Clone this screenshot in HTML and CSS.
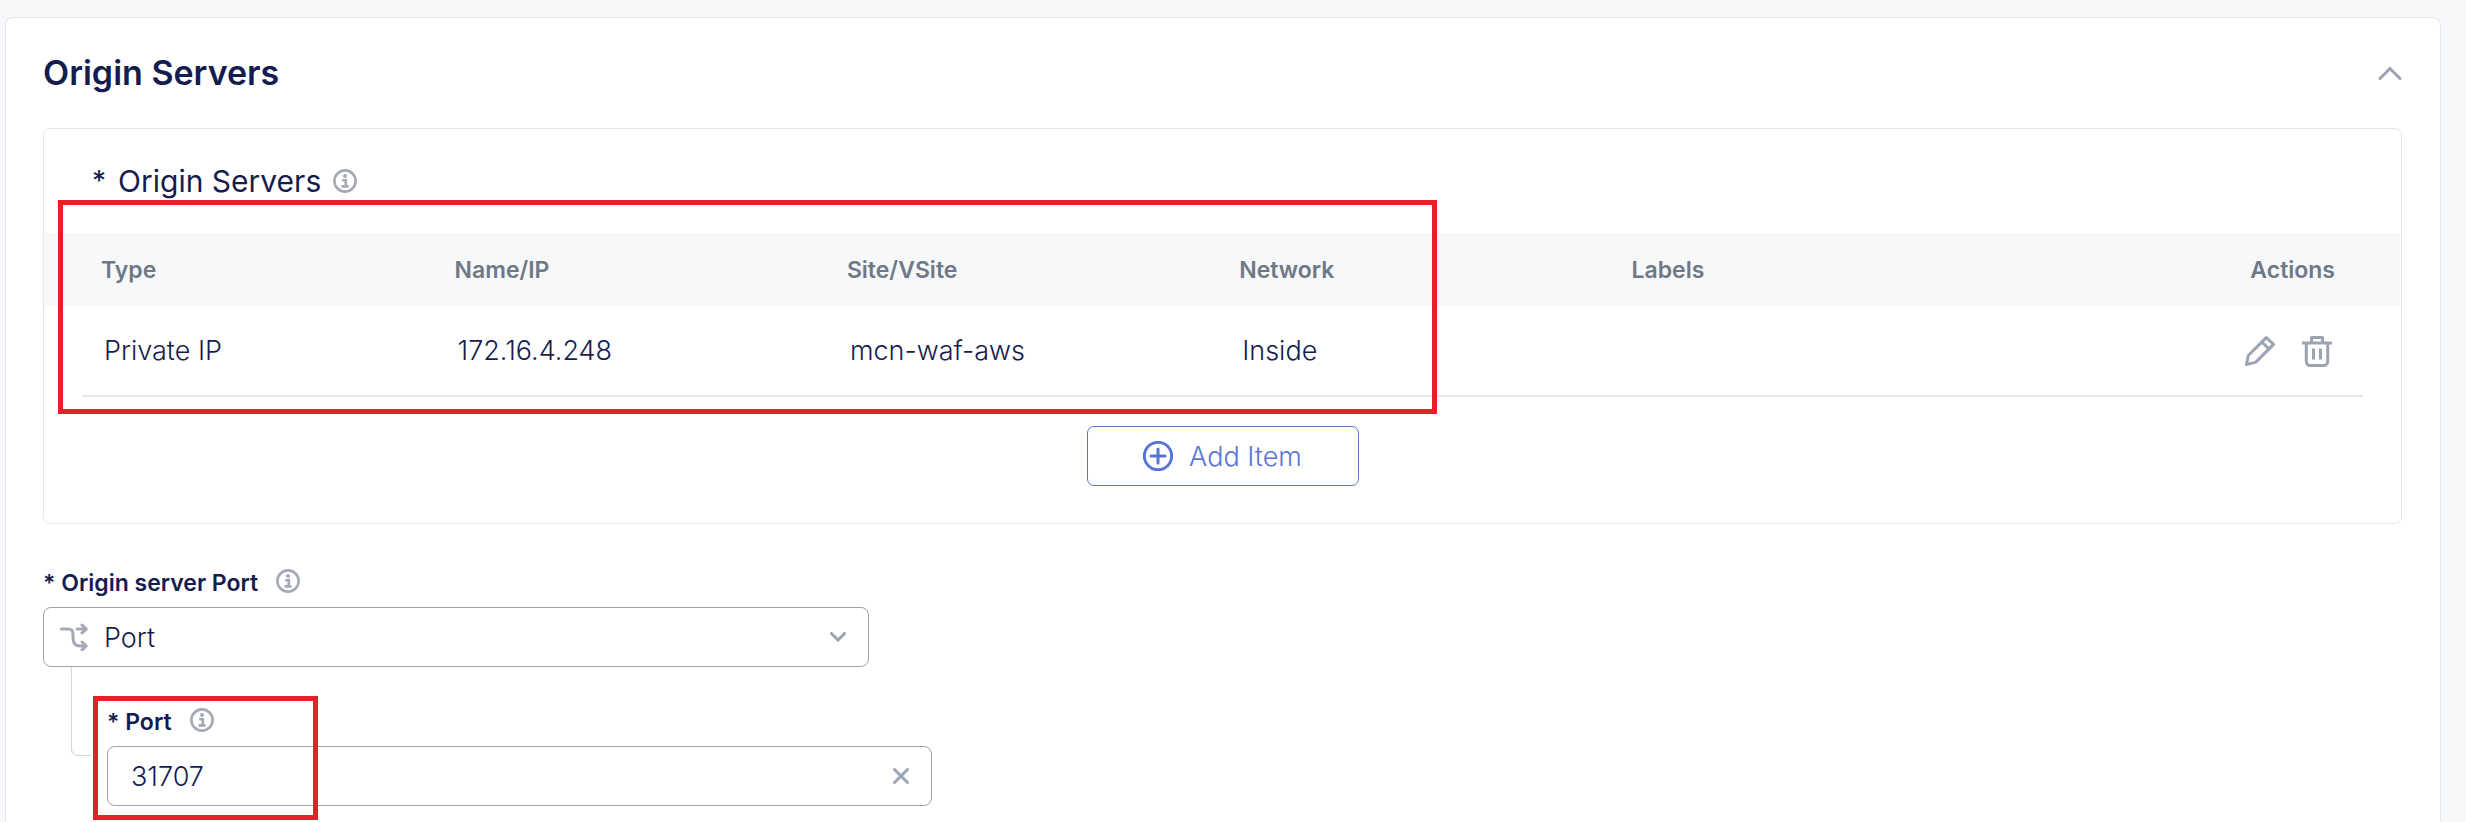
FILE: index.html
```html
<!DOCTYPE html>
<html lang="en">
<head>
<meta charset="utf-8">
<title>Origin Servers</title>
<link rel="stylesheet" href="styles.css">
</head>
<body>
<svg class="defs" aria-hidden="true">
  <symbol id="icon-info" viewBox="0 0 24 24">
    <circle cx="12" cy="12" r="10.6" fill="none" stroke="currentColor" stroke-width="2.6"/>
    <circle cx="12" cy="7" r="2" fill="currentColor"/>
    <path d="M9.2 11.2h3.6v6M8.6 17.4h7" fill="none" stroke="currentColor" stroke-width="2.6"/>
  </symbol>
</svg>
<main class="page">
  <section class="card">
    <header class="card-header">
      <h1 class="card-title">Origin Servers</h1>
      <button class="icon-button" type="button" aria-label="Collapse section">
        <svg class="icon-collapse" viewBox="0 0 24 14"><path d="M2 12.5 12 2.5l10 10"/></svg>
      </button>
    </header>

    <section class="panel">
      <div class="panel-heading">
        <span class="panel-star">*</span>
        <h2 class="panel-title">Origin Servers</h2>
        <svg class="icon-info"><use href="#icon-info"/></svg>
      </div>
      <table class="servers">
        <thead>
          <tr>
            <th class="col-type">Type</th>
            <th class="col-data">Name/IP</th>
            <th class="col-data">Site/VSite</th>
            <th class="col-data">Network</th>
            <th class="col-data">Labels</th>
            <th class="col-actions">Actions</th>
          </tr>
        </thead>
        <tbody>
          <tr>
            <td>Private IP</td>
            <td>172.16.4.248</td>
            <td>mcn-waf-aws</td>
            <td>Inside</td>
            <td></td>
            <td>
              <div class="row-actions">
                <button class="icon-button" type="button" aria-label="Edit">
                  <svg class="icon-action" viewBox="0 0 32 32"><path d="M2.5 29.5 4.3 20.5 22.3 2.6 29.6 9.4 11.6 27.4ZM17.8 7l7.2 6.8"/></svg>
                </button>
                <button class="icon-button" type="button" aria-label="Delete">
                  <svg class="icon-action" viewBox="0 0 32 32"><path d="M1 8h30M10.500 8V2.500h11V8M5.300 8v18.500a4 4 0 0 0 4 4h13.400a4 4 0 0 0 4-4V8M12.500 13.500v11M19.500 13.500v11"/></svg>
                </button>
              </div>
            </td>
          </tr>
        </tbody>
      </table>
      <button class="add-item" type="button">
        <svg class="icon-add" viewBox="0 0 30 30"><circle cx="15" cy="15" r="13.700"/><path d="M15 8v14M8 15h14"/></svg>
        Add Item
      </button>
      <div class="highlight highlight-servers"></div>
    </section>

    <div class="field">
      <div class="field-heading">
        <label class="field-label" for="port-type">* Origin server Port</label>
        <svg class="icon-info"><use href="#icon-info"/></svg>
      </div>
      <div class="control">
        <select class="input input-select" id="port-type"><option>Port</option></select>
        <svg class="icon-branch" viewBox="0 0 28 28"><path d="M1.500 6H8c5 0 5 3 5 7v2c0 5 2 8 7 8h6M17 6h9M22 2l4.300 4-4.300 4M22 19l4.300 4-4.300 4"/></svg>
        <svg class="icon-chevron" viewBox="0 0 16 10"><path d="m1.500 1.500 6.500 6.500 6.500-6.500"/></svg>
      </div>
    </div>

    <div class="nested">
      <div class="connector"></div>
      <div class="nested-field">
        <div class="field-heading">
          <label class="field-label" for="port">* Port</label>
          <svg class="icon-info"><use href="#icon-info"/></svg>
        </div>
        <div class="control">
          <input class="input input-text" id="port" type="text" value="31707">
          <button class="icon-button clear" type="button" aria-label="Clear">
            <svg class="icon-clear" viewBox="0 0 16 16"><path d="m1.500 1.500 13 13M14.500 1.500l-13 13"/></svg>
          </button>
        </div>
        <div class="highlight highlight-port"></div>
      </div>
    </div>
  </section>
</main>
</body>
</html>
```

FILE: styles.css
```css
* {
  box-sizing: border-box;
}

body {
  margin: 0;
  background: #f6f8fa;
  color: #151d4f;
  font-family: Inter, "Liberation Sans", sans-serif;
  font-size: 27px;
  font-weight: 300;
}

.defs {
  display: none;
}

.page {
  display: flex;
  min-height: 100vh;
  padding: 17px 25px 0 5px;
}

.card {
  flex: 1;
  padding: 0 38px 0 37px;
  border: 1px solid #e4e6ee;
  border-bottom: 0;
  border-radius: 8px 8px 0 0;
  background: #fff;
}

.card-header {
  display: flex;
  align-items: center;
  justify-content: space-between;
  height: 110px;
}

.card-title {
  margin: 0;
  font-size: 34px;
  font-weight: 600;
  line-height: 40px;
}

.icon-button {
  display: flex;
  padding: 0;
  border: 0;
  background: none;
  color: #9ca4b2;
  cursor: pointer;
}

svg {
  display: block;
  flex: none;
  fill: none;
  stroke: currentColor;
}

.icon-collapse {
  width: 24px;
  height: 14px;
  stroke-width: 3;
  stroke-linecap: round;
}

.icon-info {
  width: 24px;
  height: 24px;
  color: #a3a9b5;
  stroke: none;
}

.panel {
  position: relative;
  border: 1px solid #e6e7eb;
  border-radius: 7px;
}

.panel-heading {
  display: flex;
  align-items: center;
  height: 104px;
  padding-left: 48px;
}

.panel-star {
  font-size: 28px;
  font-weight: 400;
  margin-right: 12px;
}

.panel-title {
  margin: 0 12px 0 0;
  font-size: 30px;
  font-weight: 400;
  line-height: 36px;
}

.servers {
  width: calc(100% - 76px);
  margin: 0 38px;
  border-collapse: separate;
  border-spacing: 0;
  table-layout: fixed;
}

.servers th {
  height: 73px;
  padding: 0 0 0 19px;
  background: #f6f8fa;
  color: #6f7886;
  font-size: 23px;
  font-weight: 600;
  text-align: left;
}

.servers th:first-child {
  box-shadow: -38px 0 0 #f6f8fa;
}

.servers th:last-child {
  padding: 0 28px 0 0;
  box-shadow: 38px 0 0 #f6f8fa;
  text-align: right;
}

.servers .col-type {
  width: 15.5%;
}

.servers .col-data {
  width: 17.2%;
}

.servers td {
  height: 91px;
  padding: 0 0 0 22px;
  border-bottom: 2px solid #e6e7e9;
}

.servers td:last-child {
  padding: 0 30px 0 0;
}

.row-actions {
  display: flex;
  justify-content: flex-end;
  gap: 25px;
}

.icon-action {
  width: 32px;
  height: 32px;
  stroke-width: 3;
  stroke-linejoin: round;
}

.add-item {
  display: flex;
  align-items: center;
  justify-content: center;
  gap: 16px;
  width: 272px;
  height: 60px;
  margin: 29px auto 37px;
  border: 1px solid #5f78bf;
  border-radius: 7px;
  background: #fff;
  color: #5a74d6;
  font: inherit;
  cursor: pointer;
}

.icon-add {
  width: 30px;
  height: 30px;
  stroke-width: 3;
  stroke-linecap: round;
}

.field {
  width: 35%;
  margin-top: 42px;
}

.field-heading {
  display: flex;
  gap: 18px;
  height: 41px;
}

.field-label {
  font-size: 23px;
  font-weight: 600;
  line-height: 34px;
}

.field-heading .icon-info {
  margin-top: 3px;
}

.control {
  display: grid;
  align-items: center;
}

.control > * {
  grid-area: 1 / 1;
}

.input {
  width: 100%;
  height: 60px;
  margin: 0;
  border: 1px solid #9fa2ad;
  border-radius: 8px;
  background: #fff;
  color: inherit;
  font: inherit;
  appearance: none;
}

.input-select {
  padding: 0 60px;
}

.input-text {
  padding: 0 60px 0 23px;
}

.icon-branch {
  width: 28px;
  height: 28px;
  margin-left: 17px;
  color: #a3a9b5;
  stroke-width: 3;
  stroke-linecap: round;
  stroke-linejoin: round;
  pointer-events: none;
}

.icon-chevron {
  justify-self: end;
  width: 16px;
  height: 10px;
  margin-right: 23px;
  color: #9ca4b2;
  stroke-width: 3;
  stroke-linecap: round;
  pointer-events: none;
}

.clear {
  justify-self: end;
  margin-right: 23px;
}

.icon-clear {
  width: 16px;
  height: 16px;
  stroke-width: 3;
  stroke-linecap: round;
}

.nested {
  display: flex;
  padding: 0 0 16px 28px;
}

.connector {
  width: 20px;
  height: 89px;
  margin-right: 16px;
  border: solid #d3d6dc;
  border-width: 0 0 1px 1px;
  border-radius: 0 0 0 7px;
}

.nested-field {
  position: relative;
  flex: 0 0 35.4%;
  padding-top: 38px;
}

.highlight {
  position: absolute;
  border: 5px solid #e61f28;
  pointer-events: none;
}

.highlight-servers {
  top: 71px;
  left: 14px;
  width: 58.5%;
  height: 214px;
}

.highlight-port {
  top: 29px;
  left: -14px;
  width: 225px;
  height: 124px;
}
```
